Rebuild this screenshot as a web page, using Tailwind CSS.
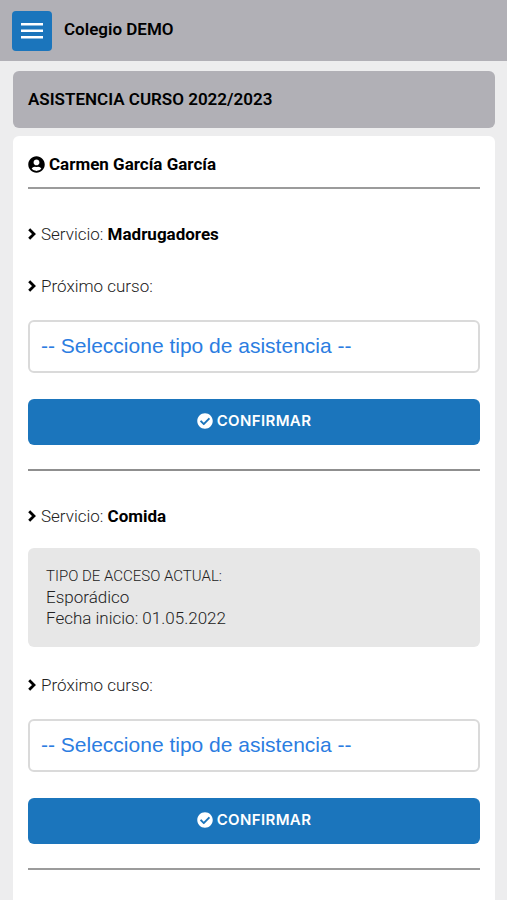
<!DOCTYPE html>
<html lang="es">
<head>
<meta charset="utf-8">
<meta name="viewport" content="width=device-width, initial-scale=1">
<title>Colegio DEMO</title>
<script src="https://cdn.jsdelivr.net/npm/@tailwindcss/browser@4"></script>
</head>
<body class="min-h-screen bg-[#ededee] font-['Roboto',sans-serif] text-[17px] leading-6 text-black">
<svg class="hidden" aria-hidden="true">
  <symbol id="chevron" viewBox="0 0 8 12"><path d="M1.200 1.200 6 6l-4.800 4.800" fill="none" stroke="currentColor" stroke-width="2.800"/></symbol>
  <symbol id="check" viewBox="0 0 512 512"><path fill="currentColor" d="M504 256c0 137-111 248-248 248S8 393 8 256 119 8 256 8s248 111 248 248zM227.300 387.300l184-184c6.200-6.200 6.200-16.400 0-22.600l-22.600-22.600c-6.200-6.200-16.400-6.200-22.600 0L216 308.100l-70.100-70.100c-6.200-6.200-16.400-6.200-22.600 0l-22.600 22.600c-6.200 6.200-6.200 16.400 0 22.600l104 104c6.200 6.300 16.400 6.300 22.600.100z"/></symbol>
</svg>
<header class="flex h-[61px] items-center gap-3 bg-[#b1b0b6] px-3">
  <button type="button" aria-label="Menú" class="flex size-10 items-center justify-center rounded bg-[#1b75bc] text-white">
    <svg class="h-4 w-[22px]" viewBox="0 0 22 16" fill="currentColor"><path d="M0 0h22v2.500H0zM0 6.500h22V9H0zM0 13h22v2.500H0z"/></svg>
  </button>
  <span class="pb-1 font-semibold">Colegio DEMO</span>
</header>
<main class="px-3 pt-[10px] pl-[13px]">
  <h1 class="rounded-md bg-[#b1b0b6] px-[15px] pt-4 pb-[17px] font-semibold">ASISTENCIA CURSO 2022/2023</h1>
  <section class="mt-2 min-h-[764px] rounded-t-md bg-white px-[15px] pt-4">
    <h2 class="flex items-center gap-1 border-b-2 border-[#9b9b9b] pb-[11px] font-bold">
      <svg class="size-[17px]" viewBox="0 0 496 512" fill="currentColor"><path d="M248 8C111 8 0 119 0 256s111 248 248 248 248-111 248-248S385 8 248 8zm0 96c48.600 0 88 39.400 88 88s-39.400 88-88 88-88-39.400-88-88 39.400-88 88-88zm0 344c-58.700 0-111.300-26.600-146.500-68.200 18.800-35.400 55.600-59.800 98.500-59.800 2.400 0 4.800.400 7.100 1.100 13 4.200 26.600 6.900 40.900 6.900 14.300 0 28-2.700 40.900-6.900 2.300-.7 4.700-1.100 7.100-1.100 42.900 0 79.700 24.400 98.500 59.800C359.300 421.400 306.700 448 248 448z"/></svg>
      Carmen García García
    </h2>
    <form class="border-b-2 border-[#8f8f8f] pt-[33px] pb-6">
      <p class="flex items-center gap-[5px] font-light"><svg class="h-3 w-2"><use href="#chevron"/></svg><span class="text-[#222222]">Servicio: <strong class="font-bold text-black">Madrugadores</strong></span></p>
      <label for="curso1" class="mt-7 flex items-center gap-[5px] font-light"><svg class="h-3 w-2"><use href="#chevron"/></svg><span class="text-[#222222]">Próximo curso:</span></label>
      <select id="curso1" class="mt-[22px] block h-[53px] w-full appearance-none rounded-md border-2 border-[#dadada] bg-white px-[11px] pb-[2px] font-['Liberation_Sans',sans-serif] text-[21px] text-[#2b7de1]"><option>-- Seleccione tipo de asistencia --</option></select>
      <button type="button" class="mt-[26px] flex h-[46px] w-full items-center justify-center gap-1 rounded-md bg-[#1b75bc] pb-[2px] font-['Inter',sans-serif] text-[15px] font-semibold tracking-wide text-white"><svg class="size-4"><use href="#check"/></svg>CONFIRMAR</button>
    </form>
    <form class="border-b-2 border-[#9b9b9b] pt-[33px] pb-6">
      <p class="flex items-center gap-[5px] font-light"><svg class="h-3 w-2"><use href="#chevron"/></svg><span class="text-[#222222]">Servicio: <strong class="font-bold text-black">Comida</strong></span></p>
      <div class="mt-5 rounded-md bg-[#e7e7e7] px-[18px] py-[18px] leading-[21px] font-light text-[#222222]">
        <p class="text-[15px]">TIPO DE ACCESO ACTUAL:</p>
        <p>Esporádico</p>
        <p>Fecha inicio: 01.05.2022</p>
      </div>
      <label for="curso2" class="mt-[26px] flex items-center gap-[5px] font-light"><svg class="h-3 w-2"><use href="#chevron"/></svg><span class="text-[#222222]">Próximo curso:</span></label>
      <select id="curso2" class="mt-[22px] block h-[53px] w-full appearance-none rounded-md border-2 border-[#dadada] bg-white px-[11px] pb-[2px] font-['Liberation_Sans',sans-serif] text-[21px] text-[#2b7de1]"><option>-- Seleccione tipo de asistencia --</option></select>
      <button type="button" class="mt-[26px] flex h-[46px] w-full items-center justify-center gap-1 rounded-md bg-[#1b75bc] pb-[2px] font-['Inter',sans-serif] text-[15px] font-semibold tracking-wide text-white"><svg class="size-4"><use href="#check"/></svg>CONFIRMAR</button>
    </form>
  </section>
</main>
</body>
</html>
